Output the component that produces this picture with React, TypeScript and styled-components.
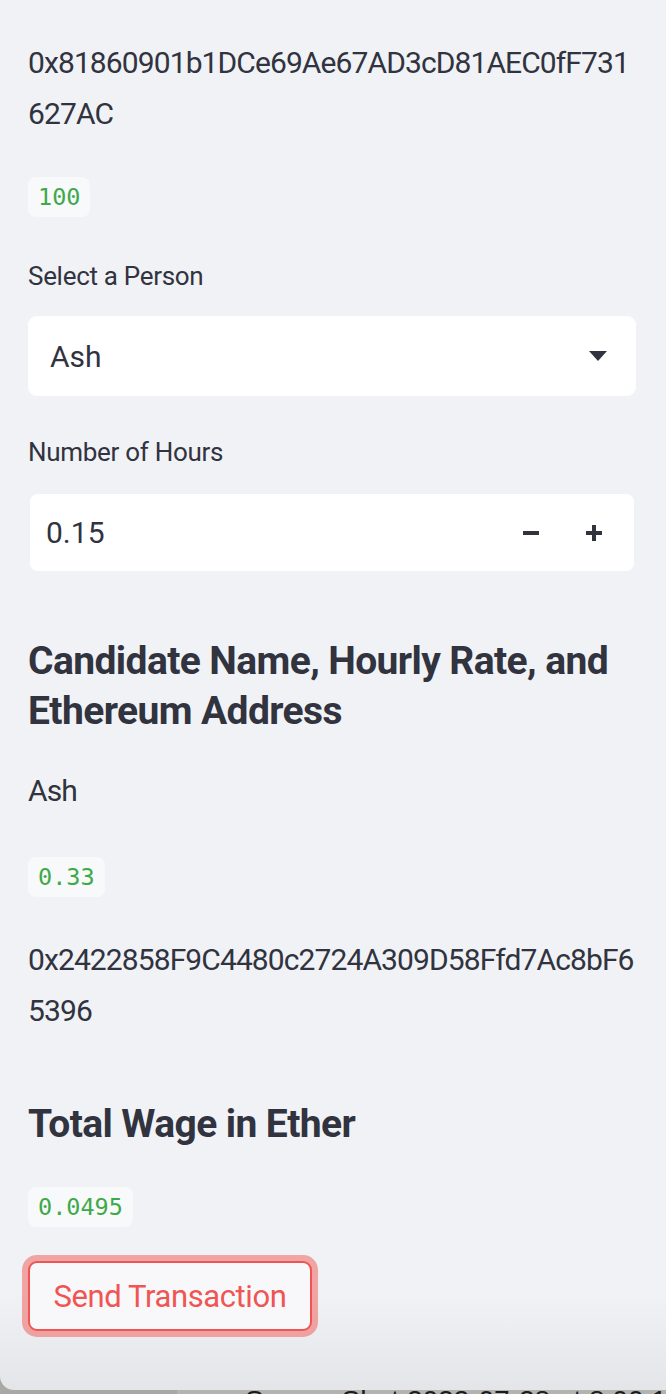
import styled, { createGlobalStyle } from "styled-components";

const GlobalStyle = createGlobalStyle`
	html, body {
		margin: 0;
		padding: 0;
		background: #a9a8a5;
	}
	* {
		box-sizing: border-box;
	}
`;

const Sidebar = styled.div`
	height: 1390px;
	overflow: hidden;
	background: linear-gradient(to bottom, #f0f2f6 0%, #f0f2f6 93%, #e4e5e8 100%);
	border-bottom-left-radius: 14px;
	padding: 37px 30px 0 28px;
	font-family: Roboto, "Liberation Sans", sans-serif;
	color: #31333f;
	display: flex;
	flex-direction: column;
`;

const Text = styled.div<{ $after?: number }>`
	font-size: 30px;
	line-height: 51px;
	letter-spacing: -0.9px;
	word-break: break-all;
	margin-bottom: ${(p) => p.$after ?? 36}px;
`;

const CodeRow = styled.div<{ $after?: number }>`
	display: flex;
	margin-bottom: ${(p) => p.$after ?? 36}px;
`;

const Code = styled.code`
	font-family: "DejaVu Sans Mono", "Liberation Mono", monospace;
	font-size: 23.5px;
	line-height: 32px;
	padding: 4px 10px;
	color: #3ea948;
	background: #f8f9fb;
	border-radius: 8px;
`;

const Label = styled.div<{ $after?: number }>`
	font-size: 26px;
	line-height: 40px;
	letter-spacing: -0.3px;
	margin-bottom: ${(p) => p.$after ?? 20}px;
`;

const SelectBox = styled.div`
	height: 80px;
	background: #ffffff;
	border-radius: 9px;
	display: flex;
	align-items: center;
	justify-content: space-between;
	padding: 0 29px 0 22px;
	font-size: 30px;
	margin-bottom: 36px;
`;

const Caret = styled.span`
	width: 0;
	height: 0;
	border-left: 9px solid transparent;
	border-right: 9px solid transparent;
	border-top: 10px solid #31333f;
`;

const NumberBox = styled.div`
	height: 77px;
	margin: 0 2px 65px 2px;
	background: #ffffff;
	border-radius: 8px;
	display: flex;
	align-items: center;
	padding: 0 24px 0 16px;
	font-size: 30px;
`;

const NumberValue = styled.span`
	flex: 1;
`;

const StepButton = styled.span`
	width: 32px;
	height: 32px;
	display: flex;
	align-items: center;
	justify-content: center;
	margin-left: 31px;
`;

const Heading = styled.h3<{ $after?: number }>`
	margin: 0 0 ${(p) => p.$after ?? 29}px 0;
	font-size: 39px;
	font-weight: 700;
	line-height: 50px;
	letter-spacing: -0.6px;
`;

const SendButton = styled.button`
	align-self: flex-start;
	width: 284px;
	height: 70px;
	background: #f8f8fb;
	border: 2px solid #ef5552;
	border-radius: 9px;
	box-shadow: 0 0 0 6px rgba(239, 85, 82, 0.5);
	color: #ef5552;
	font-family: Roboto, "Liberation Sans", sans-serif;
	font-size: 31px;
	letter-spacing: -0.4px;
	cursor: pointer;
`;

const Desktop = styled.div`
	height: 4px;
	overflow: hidden;
	display: flex;
	background: linear-gradient(to right, #a9a8a5 0, #a9a8a5 177px, #b4b3b0 177px);
	font-family: "Liberation Sans", sans-serif;
	font-size: 28px;
	line-height: 28px;
	color: #1c1c1c;
`;

const DesktopFile = styled.span`
	margin: 0 13px 0 232px;
	width: 28px;
	height: 4px;
	background: #d2d1ce;
`;

const DesktopName = styled.span`
	margin-top: -3px;
	white-space: nowrap;
`;

function Minus() {
	return (
		<svg width="16" height="4" viewBox="0 0 16 4">
			<rect width="16" height="4" fill="#31333f" />
		</svg>
	);
}

function Plus() {
	return (
		<svg width="16" height="16" viewBox="0 0 16 16">
			<rect x="0" y="6" width="16" height="4" fill="#31333f" />
			<rect x="6" y="0" width="4" height="16" fill="#31333f" />
		</svg>
	);
}

export default function App() {
	return (
		<>
			<GlobalStyle />
			<Sidebar>
				<Text $after={38}>0x81860901b1DCe69Ae67AD3cD81AEC0fF731627AC</Text>
				<CodeRow $after={39}>
					<Code>100</Code>
				</CodeRow>
				<Label>Select a Person</Label>
				<SelectBox>
					<span>Ash</span>
					<Caret />
				</SelectBox>
				<Label $after={22}>Number of Hours</Label>
				<NumberBox>
					<NumberValue>0.15</NumberValue>
					<StepButton>
						<Minus />
					</StepButton>
					<StepButton>
						<Plus />
					</StepButton>
				</NumberBox>
				<Heading>Candidate Name, Hourly Rate, and Ethereum Address</Heading>
				<Text $after={41}>Ash</Text>
				<CodeRow $after={37}>
					<Code>0.33</Code>
				</CodeRow>
				<Text $after={63}>0x2422858F9C4480c2724A309D58Ffd7Ac8bF65396</Text>
				<Heading $after={38}>Total Wage in Ether</Heading>
				<CodeRow $after={34}>
					<Code>0.0495</Code>
				</CodeRow>
				<SendButton>Send Transaction</SendButton>
			</Sidebar>
			<Desktop>
				<DesktopFile />
				<DesktopName>Screen Shot 2022-07-28 at 8.00.12 PM</DesktopName>
			</Desktop>
		</>
	);
}
